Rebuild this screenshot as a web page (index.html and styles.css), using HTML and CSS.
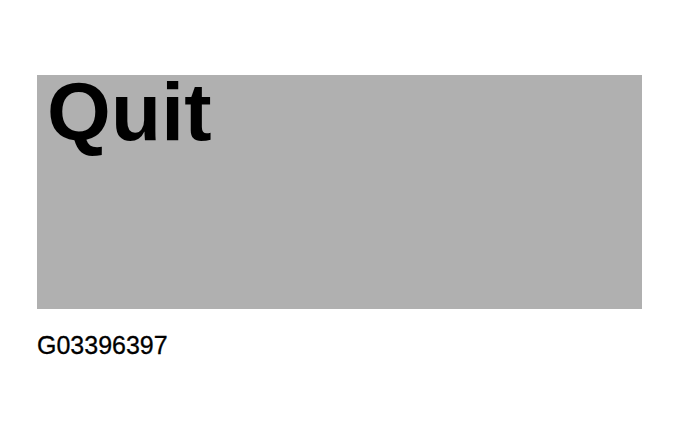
FILE: index.html
```html
<!DOCTYPE html>
<html>
<head>
<meta charset="utf-8">
<link rel="stylesheet" href="styles.css">
</head>
<body>
<div class="figure">
  <div class="panel"><span class="label">Quit</span></div>
  <div class="caption">G03396397</div>
</div>
</body>
</html>
```
FILE: styles.css
```css
html, body {
  margin: 0;
  padding: 0;
  background: #ffffff;
}
.figure {
  padding: 75px 0 0 37px;
  font-family: "Liberation Sans", Arial, sans-serif;
}
.panel {
  width: 605px;
  height: 234px;
  background: #b0b0b0;
  box-sizing: border-box;
  padding: 0 0 0 10px;
}
.label {
  display: block;
  font-size: 82px;
  font-weight: bold;
  line-height: 74px;
  letter-spacing: 0.2px;
  color: #000;
}
.caption {
  margin-top: 22px;
  font-size: 25px;
  line-height: 28px;
  color: #000;
  -webkit-text-stroke: 0.3px #000;
}
```
